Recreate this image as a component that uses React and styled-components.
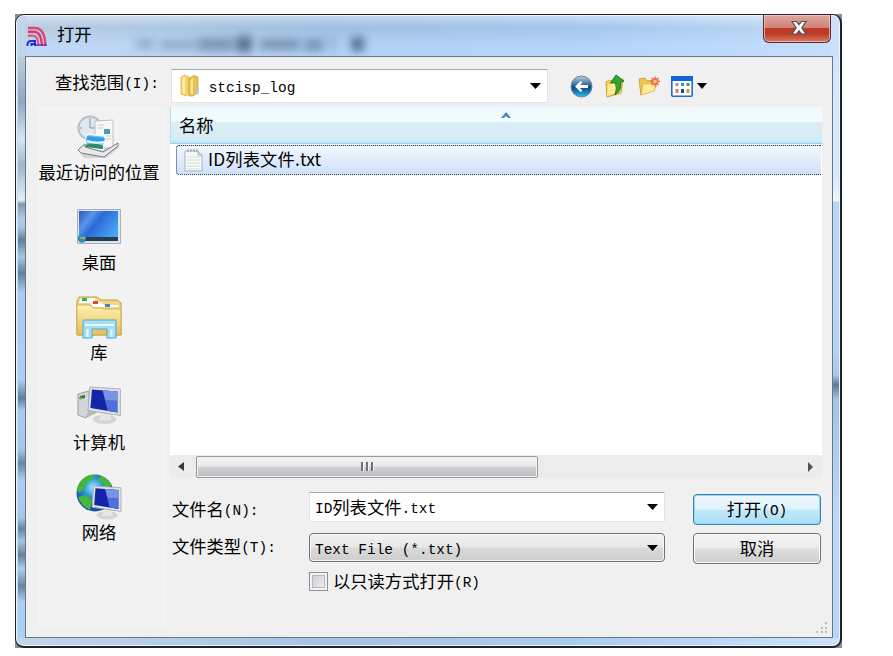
import styled, { createGlobalStyle } from "styled-components";

const GlobalStyle = createGlobalStyle`
  * {
    box-sizing: border-box;
  }
  body {
    margin: 0;
    background-color: #fff;
    font-family: "Noto Sans CJK SC", sans-serif;
    font-size: 17.3px;
    color: #000;
  }
  svg {
    display: block;
    flex: none;
  }
`;
const Backdrop = styled.div`
  width: 827px;
  height: 634px;
  margin: 14px 0 0 15px;
  background-color: #8d8d8d;
`;
const Window = styled.div`
  position: relative;
  width: 827px;
  height: 634px;
  padding: 0 9px 10px 10px;
  border-radius: 9px;
  overflow: hidden;
  border: 1px solid #1d2329;
  border-width: 1px 2px 2px 1px;
  background: linear-gradient(90deg, #c3d5e8 0, #a6c4e4 38%, #abcdf2 70%, #cde2fa 100%);
  box-shadow: inset 0 0 0 1px #e8f3fd;
`;
const EdgeGlass = styled.div`
  position: absolute;
  top: 42px;
  bottom: 8px;
  width: 7px;
  ${props => (props.$right ? "right: 1px;" : "left: 2px;")}
  background: ${props =>
    props.$right
      ? "linear-gradient(#d6e6fa 0, #d9e9fc 120px, #eef6fd 144px, #bcd7f5 145px, #b4d4f8 290px, #a9c8ea 318px, #62788f 328px, #a3c4e6 342px, #bad8fa 460px, #b8d5f8)"
      : "linear-gradient(#bccfdf 0, #8ba8c3 45px, #d5e8f8 82px, #9eb5cc 108px, #e5eff7 143px, #7e9ab2 147px, #b0cce3 162px, #a9c8e4 170px, #617d98 183px, #a7c8e7 200px, #637f9a 216px, #a8cbee 235px, #aecff1 323px, #607e9a 341px, #aacbed 354px, #a5c6e7 393px, #68849e 406px, #add0f3 423px, #a7c8e9 460px, #68849e 472px, #a5c6e7 484px, #698299 498px, #acceef 512px, #68849e 529px, #acd0f2 545px)"};
`;
const TitleBar = styled.div`
  position: relative;
  display: flex;
  align-items: flex-start;
  height: 41px;
  background: linear-gradient(rgba(255, 255, 255, 0.35) 0, rgba(110, 153, 197, 0.12) 30%, rgba(190, 219, 255, 0.55) 75%);
  .title_icon {
    margin: 11px 9px 0 0;
  }
  .title_text {
    line-height: 24px;
    margin-top: 7px;
  }
`;
const Smudges = styled.svg`
  position: absolute;
  left: 100px;
  top: 14px;
  filter: blur(4px);
`;
const CloseButton = styled.button`
  display: flex;
  align-items: center;
  justify-content: center;
  width: 68px;
  height: 28px;
  margin: 0 0 0 auto;
  padding: 0 0 1px 3px;
  border: 1px solid #57292c;
  border-top: none;
  border-radius: 0 0 6px 6px;
  background: linear-gradient(#dfa69d 0, #cf8379 46%, #bd3a28 50%, #b93c29 70%, #d77b66 100%);
  box-shadow: inset 0 0 0 1px rgba(255, 215, 205, 0.65);
`;
const Client = styled.div`
  position: relative;
  width: 808px;
  height: 582px;
  margin-left: -1px;
  border: 1px solid #667787;
  background-color: #f0f0f0;
`;
const LookRow = styled.div`
  display: flex;
  align-items: flex-start;
  height: 50px;
  padding: 12px 0 0 29px;
  .look_label {
    width: 116px;
    padding-top: 1px;
  }
`;
const Combo = styled.div`
  display: flex;
  align-items: center;
  width: ${props => props.$width}px;
  height: ${props => props.$height}px;
  padding: 0 6px 0 ${props => props.$left || 5}px;
  border: 1px solid #e2e3e6;
  border-top-color: #a5a7ab;
  background-color: #fff;
  .combo_arrow {
    margin-left: auto;
  }
`;
const DropDown = styled(Combo)`
  border: 1px solid #707070;
  border-radius: 4px;
  background: linear-gradient(#f1f1f1 0, #e8e8e8 48%, #dadada 52%, #cecece 100%);
  box-shadow: inset 0 0 0 1px #f8f8f8;
`;
const Tools = styled.div`
  display: flex;
  align-items: center;
  gap: 11px;
  height: 34px;
  margin-left: 22px;
  .tools_arrow {
    margin-left: -7px;
  }
`;
const Middle = styled.div`
  display: flex;
`;
const Places = styled.div`
  width: 128px;
  height: 521px;
  margin: 0 4px 0 12px;
  padding-right: 6px;
  background-color: #f2f2f2;
  border: 1px solid #f5f5f5;
`;
const Place = styled.div`
  display: flex;
  flex-direction: column;
  align-items: center;
  height: 90px;
  padding-top: 6px;
  white-space: nowrap;
  line-height: 24px;
`;
const Main = styled.div`
  width: 652px;
`;
const FileList = styled.div`
  height: 348px;
  background-color: #fff;
`;
const ListHeader = styled.div`
  display: flex;
  height: 37px;
  padding: 6px 8px;
  line-height: 24px;
  border-bottom: 1px solid #92d2f2;
  border-left: 1px solid #b5e0f2;
  background: linear-gradient(#f0f9fb 0, #f2fcfe 40%, #daeef6 42%, #d7ebf2 92%, #b8e3f5 100%);
  svg {
    margin: -1px 0 0 287px;
  }
`;
const FileRow = styled.div`
  display: flex;
  align-items: center;
  height: 30px;
  margin: 1px 1px 0 6px;
  padding-left: 6px;
  border: 1px dotted #20324a;
  border-right: none;
  border-radius: 3px 0 0 3px;
  background: linear-gradient(#f2f7fd, #cfe1f9);
  line-height: 24px;
  svg {
    margin-right: 4px;
  }
  span {
    margin-top: -2px;
    letter-spacing: 0.15px;
  }
`;
const ScrollBar = styled.div`
  display: flex;
  align-items: center;
  height: 23px;
  padding: 0 8px 0 8px;
  background-color: #ececec;
`;
const Thumb = styled.div`
  display: flex;
  align-items: center;
  justify-content: center;
  gap: 2px;
  width: 342px;
  height: 22px;
  margin: 0 auto 0 11px;
  border: 1px solid #989898;
  border-radius: 2px;
  background: linear-gradient(#f4f4f4 0, #e8e8ea 46%, #d2d2d5 52%, #bdbdc2 100%);
  box-shadow: inset 0 0 0 1px #f3f3f3;
  i {
    width: 3px;
    height: 9px;
    border-left: 2px solid #6f6f74;
    border-right: 1px solid #f5f5f5;
  }
`;
const Form = styled.div`
  display: grid;
  grid-template-columns: 139px 356px 128px;
  .form_label {
    padding-left: 2px;
  }
`;
const Fields = styled.div`
  display: flex;
  flex-direction: column;
  padding-top: ${props => props.$top}px;
  gap: ${props => props.$gap}px;
  margin-left: ${props => props.$left || 0}px;
`;
const Button = styled.button`
  width: 128px;
  height: 31px;
  padding: 0 0 2px;
  font: inherit;
  color: #000;
  border: 1px solid ${props => (props.$primary ? "#3c7fb1" : "#707070")};
  border-radius: 4px;
  background: ${props =>
    props.$primary
      ? "linear-gradient(#edf8fd 0, #def3fc 48%, #c3e9fa 52%, #a9ddf6 100%)"
      : "linear-gradient(#f3f3f3 0, #ebebeb 48%, #dcdcdc 52%, #cfcfcf 100%)"};
  box-shadow: inset 0 0 0 1px ${props => (props.$primary ? "#8fd9f5" : "#fafafa")};
`;
const CheckRow = styled.div`
  display: flex;
  align-items: center;
  gap: 5px;
  margin-top: -4px;
`;
const CheckBox = styled.span`
  width: 19px;
  height: 19px;
  border: 1px solid #8e8f8f;
  background: linear-gradient(135deg, #c6cad2, #f3f3f5);
  box-shadow: inset 0 0 0 2px #f4f4f4, inset 0 0 0 3px #b5b8bd;
`;
const SongText = styled.span`
  display: inline-block;
  height: 24px;
  line-height: 24px;
  white-space: pre;
  .half {
    font-family: "Liberation Mono", monospace;
    font-size: 14.45px;
    line-height: 1;
    vertical-align: 1px;
  }
`;
const Grip = styled.svg`
  position: absolute;
  right: 4px;
  bottom: 3px;
`;

// full width glyphs and half width glyphs sit on a 2:1 grid
const Song = ({ children, className }) => (
  <SongText className={className}>
    {children.split(/([\x20-\x7e]+)/).map((part, index) =>
      index % 2 ? (
        <span key={index} className='half'>
          {part}
        </span>
      ) : (
        part
      )
    )}
  </SongText>
);
const Arrow = () => (
  <svg className='combo_arrow' width='11' height='6' viewBox='0 0 11 6'>
    <path d='M0 0H11L5.5 6Z' />
  </svg>
);
const AppIcon = () => (
  <svg className='title_icon' width='22' height='22' viewBox='0 0 22 22' fill='none'>
    <path d='M2 2H9C15 2 19 7 19.5 20' stroke='#e0436b' strokeWidth='2.4' />
    <path d='M2 5.8H8C13 5.8 15.5 10 16 20' stroke='#d33b6b' strokeWidth='2.4' />
    <path d='M2 9.6H6C11 9.6 12 13 12.5 20' stroke='#e6547a' strokeWidth='2.2' />
    <path d='M1.5 20V18Q2 15 5 15H9V20M5.5 20V18H9' stroke='#2330d8' strokeWidth='2' />
    <path d='M10 19H21' stroke='#7a2fb0' strokeWidth='1.4' />
  </svg>
);
const FolderIcon = () => (
  <svg width='20' height='24' viewBox='0 0 20 24'>
    <path d='M1 3L5 1L9 3V20L6 22L1 20Z' fill='#f3d56b' stroke='#d6b244' strokeWidth='.7' />
    <path d='M9 4L14 1.5L18 3V18L13 22H9Z' fill='#e7c04d' stroke='#c9a136' strokeWidth='.7' />
    <path d='M2.5 4L5 3V20L2.5 19Z' fill='#fff0a8' />
    <path d='M10.5 6L13 4V20H10.5Z' fill='#fae796' />
    <path d='M17 13L19 14V19L16 21Z' fill='#a9cce4' />
  </svg>
);
const BackIcon = () => (
  <svg width='23' height='23' viewBox='0 0 23 23'>
    <defs>
      <linearGradient id='back' x2='0' y2='1'>
        <stop offset='0' stopColor='#c3d0dc' />
        <stop offset='.4' stopColor='#3c6e9c' />
        <stop offset='.55' stopColor='#0c4a84' />
        <stop offset='1' stopColor='#29bdf0' />
      </linearGradient>
    </defs>
    <circle cx='11.5' cy='11.5' r='10.5' fill='url(#back)' stroke='#70859a' />
    <path d='M10.5 6L5 11.5L10.5 17L12.5 15.5L10 13H18V10H10L12.5 7.5Z' fill='#f5fbff' />
  </svg>
);
const UpIcon = () => (
  <svg width='22' height='24' viewBox='0 0 22 24'>
    <path d='M2 8L7 6L9 8L19 5L17 19L3 23Z' fill='#f2cf55' stroke='#d0a32e' />
    <path d='M4 11L16 7L15 18L3 22Z' fill='#ffec91' />
    <path d='M12 1L20 7L16.5 8.5Q18 16 11 21Q13.5 14 11.5 9L6.5 9Z' fill='#32a52c' stroke='#187018' strokeWidth='.9' />
  </svg>
);
const NewIcon = () => (
  <svg width='23' height='22' viewBox='0 0 23 22'>
    <path d='M2 4L8 3L10 6L18 5L19 12L4 20Z' fill='#edc653' stroke='#d1a63a' />
    <path d='M4 20L6 9L20 8L17 16Z' fill='#ffee99' stroke='#d5ad43' strokeWidth='.8' />
    <g stroke='#f4714c' strokeWidth='1.6'>
      <path d='M18 1.5V11.5M13 6.5H23M14.5 3L21.5 10M21.5 3L14.5 10' />
      <circle cx='18' cy='6.5' r='2.6' fill='#ffc98a' />
    </g>
  </svg>
);
const ViewIcon = () => (
  <svg width='22' height='21' viewBox='0 0 22 21'>
    <rect x='.8' y='.8' width='20.4' height='19.4' rx='1' fill='#fff' stroke='#246bd0' strokeWidth='1.6' />
    <path d='M0 0H22V5H0Z' fill='#1265d8' />
    <path d='M4.5 7h3v3h-3Z' fill='#9b8bc8' />
    <path d='M10 7h3v3h-3Z' fill='#3b94c4' />
    <path d='M15.5 7h3v3h-3Z' fill='#33a14a' />
    <path d='M4.5 13h3v4h-3Z' fill='#e87863' />
    <path d='M10 13h3v4h-3Z' fill='#174a95' />
    <path d='M15.5 13h3v4h-3Z' fill='#c5a133' />
  </svg>
);
const TextFileIcon = () => (
  <svg width='21' height='24' viewBox='0 0 21 24'>
    <path d='M2 3H15L19 7V23H2Z' fill='#f8f9f9' stroke='#a9b0b5' />
    <path d='M5 1V4M8 1V4M11 1V4M14 1V4' stroke='#969da3' />
    <path d='M15 3V7H19' fill='#ddd' stroke='#a9b0b5' />
    <path d='M4 9H17M4 12H17M4 15H17M4 18H17M4 21H17' stroke='#d3d8da' />
  </svg>
);
const RecentIcon = () => (
  <svg width='46' height='46' viewBox='0 0 46 46'>
    <path d='M5 40L10 29L44 33L30 44H8Z' fill='#b9bcbe' opacity='.6' />
    <circle cx='14' cy='14' r='11.5' fill='#e0e8ee' stroke='#b4c0c9' strokeWidth='2' />
    <path d='M14 4V14H20M14 24V22M4 14H6' stroke='#8296a5' fill='none' />
    <path d='M19 7L37 6V34H19Z' fill='#f8f8f8' stroke='#bcc1c5' />
    <path d='M22 11H28M22 14H27M30 22H35M30 25H35' stroke='#c2cbd1' />
    <path d='M28 15H34V20H28Z' fill='#4b9aba' />
    <path d='M11 20L29 22L27 36L9 33Z' fill='#70c7f1' stroke='#f2fbff' strokeWidth='1.5' />
    <path d='M10 31Q17 27 27 32V35L9 33Z' fill='#328b66' />
    <path d='M11 22L29 24L28 28L10 27Z' fill='#3b9ce0' />
    <path d='M11 27Q20 30 28 28' fill='none' stroke='#e4f7ff' strokeWidth='2' />
    <path d='M2 36L9 30V33L27 38L42 29V32L28 43L5 39Z' fill='#e8eaeb' stroke='#777d80' />
  </svg>
);
const DesktopIcon = () => (
  <svg width='46' height='46' viewBox='0 0 46 46'>
    <defs>
      <linearGradient id='desk' x2='1' y2='.6'>
        <stop offset='0' stopColor='#2856b7' />
        <stop offset='.3' stopColor='#5a94e9' />
        <stop offset='.5' stopColor='#2c69d6' />
        <stop offset='1' stopColor='#48a5f4' />
      </linearGradient>
    </defs>
    <path d='M1.5 5.5H44.5V39.5H1.5Z' fill='#dce4ee' stroke='#a8afbc' />
    <path d='M3 7H42V37H3Z' fill='url(#desk)' />
    <path d='M3 33H42V37H3Z' fill='#263c50' />
    <circle cx='6' cy='34.5' r='4.2' fill='#2a8cba' />
    <path d='M4 33H6V35H4Z' fill='#eb8155' />
    <path d='M6.5 33H8.5V35H6.5Z' fill='#9fd35d' />
  </svg>
);
const LibraryIcon = () => (
  <svg width='48' height='46' viewBox='0 0 48 46'>
    <defs>
      <linearGradient id='lib' x2='0' y2='1'>
        <stop offset='0' stopColor='#fff2b2' />
        <stop offset='1' stopColor='#e5bd55' />
      </linearGradient>
    </defs>
    <path d='M2 41V7L4 3H22L26 6H42L46 9V41Z' fill='#f1d783' stroke='#c19c43' />
    <path d='M6 4H20V8H25L29 11H43V13H18L15 9H4Z' fill='#fff' />
    <path d='M7 4h5v3h-5Z' fill='#2eb34a' />
    <path d='M18 7h5v3h-5Z' fill='#df4934' />
    <path d='M30 10h5v3h-5Z' fill='#318cc8' />
    <path d='M2 11H15L18 14H26L29 15H46V41H2Z' fill='url(#lib)' stroke='#c7a34a' strokeWidth='.8' />
    <path d='M8 44V27Q8 26 9 26H40Q41 26 41 27V44H32V35H17V44Z' fill='#a4ddf4' stroke='#48a9d1' />
    <path d='M10 31H39M12.5 35V43M36.5 35V43' stroke='#e5faff' strokeWidth='2' />
  </svg>
);
const Screen = ({ x, y, size }) => (
  <g transform={`translate(${x} ${y}) scale(${size})`}>
    <ellipse cx='17' cy='33' rx='12' ry='5' fill='#d3d6d9' />
    <path d='M14 25H21L24 34H11Z' fill='#e3e5e7' />
    <path d='M2 0L33 2V29L0 24Z' fill='#dfe2e6' stroke='#a6adb5' />
    <path d='M4 2.5L30 4.5V26L2.5 21.5Z' fill='#1424a8' />
    <path d='M15 3.3L30 4.5V26L20 24.3Z' fill='#4f70dc' />
    <path d='M15 3.3L30 4.5V14L17.5 13Z' fill='#93aeef' opacity='.6' />
  </g>
);
const ComputerIcon = () => (
  <svg width='48' height='46' viewBox='0 0 48 46'>
    <path d='M3 10L14 7V28L11 34L3 31Z' fill='#d3d6d9' stroke='#9ca1a6' />
    <path d='M5 12L10 11V14L5 15Z' fill='#4d5d54' />
    <circle cx='5.5' cy='14' r='1.5' fill='#54b63d' />
    <path d='M11 34L22 29L20 26L14 27Z' fill='#b7babd' />
    <Screen x={13} y={3} size={0.98} />
  </svg>
);
const NetworkIcon = () => (
  <svg width='48' height='46' viewBox='0 1 48 46'>
    <defs>
      <radialGradient id='globe' cx='.45' cy='.35'>
        <stop offset='0' stopColor='#9be9fa' />
        <stop offset='.5' stopColor='#2f98d4' />
        <stop offset='1' stopColor='#1a4fa8' />
      </radialGradient>
    </defs>
    <circle cx='20' cy='20' r='18.5' fill='url(#globe)' />
    <path d='M5 9Q12 0 20 2L17 7L12 9L9 16L4 20L2 17ZM26 3Q34 6 37 13L30 14L27 9L22 8ZM3 24L10 22L17 27L15 37Q6 33 3 24Z' fill='#43b739' />
    <Screen x={17} y={13} size={0.88} />
  </svg>
);

const arrPlaces = [
  { name: "最近访问的位置", Icon: RecentIcon },
  { name: "桌面", Icon: DesktopIcon },
  { name: "库", Icon: LibraryIcon },
  { name: "计算机", Icon: ComputerIcon },
  { name: "网络", Icon: NetworkIcon },
];

const App = () => {
  return (
    <>
      <GlobalStyle />
      <Backdrop>
        <Window>
          <EdgeGlass />
          <EdgeGlass $right />
          <TitleBar>
            <Smudges width='260' height='30'>
              <g fill='#526d8c'>
                <path d='M10 11h18v8h-18ZM34 12h36v8h-36Z' opacity='.45' />
                <path d='M72 9h35v13h-35Z' opacity='.6' />
                <path d='M110 7h16v16h-16Z' opacity='.95' />
                <path d='M134 10h40v11h-40ZM178 10h20v12h-20Z' opacity='.6' />
                <path d='M205 8h4v14h-4Z' opacity='.5' />
                <path d='M225 8h13v14h-13Z' opacity='.95' />
              </g>
            </Smudges>
            <AppIcon />
            <span className='title_text'>打开</span>
            <CloseButton>
              <svg width='18' height='16' viewBox='0 0 18 16'>
                <path d='M2 1.5H6.5L9 4.5L11.5 1.5H16L11.8 7.7L16 14H11.5L9 10.8L6.5 14H2L6.2 7.7Z' fill='#fff' stroke='#5b4a57' strokeWidth='1.2' />
              </svg>
            </CloseButton>
          </TitleBar>
          <Client>
            <LookRow>
              <Song className='look_label'>查找范围(I):</Song>
              <Combo $width={377} $height={34} $left={8}>
                <FolderIcon />
                <Song>{" stcisp_log"}</Song>
                <Arrow />
              </Combo>
              <Tools>
                <BackIcon />
                <UpIcon />
                <NewIcon />
                <ViewIcon />
                <svg className='tools_arrow' width='10' height='6' viewBox='0 0 10 6'>
                  <path d='M0 0H10L5 6Z' />
                </svg>
              </Tools>
            </LookRow>
            <Middle>
              <Places>
                {arrPlaces.map(({ name, Icon }) => (
                  <Place key={name}>
                    <Icon />
                    {name}
                  </Place>
                ))}
              </Places>
              <Main>
                <FileList>
                  <ListHeader>
                    名称
                    <svg width='10' height='6' viewBox='0 0 10 6'>
                      <path d='M0 6L5 0L10 6H7L5 4L3 6Z' fill='#4a8aad' />
                    </svg>
                  </ListHeader>
                  <FileRow>
                    <TextFileIcon />
                    <span>ID列表文件.txt</span>
                  </FileRow>
                </FileList>
                <ScrollBar>
                  <svg width='7' height='10' viewBox='0 0 7 10'>
                    <path d='M6 0V9L0 4.5Z' fill='#3d3d3d' />
                  </svg>
                  <Thumb>
                    <i />
                    <i />
                    <i />
                  </Thumb>
                  <svg width='6' height='10' viewBox='0 0 6 10'>
                    <path d='M0 0V10L5 5Z' fill='#505050' />
                  </svg>
                </ScrollBar>
                <Form>
                  <Fields $top={19} $gap={13} className='form_label'>
                    <Song>文件名(N):</Song>
                    <Song>文件类型(T):</Song>
                  </Fields>
                  <Fields $top={14} $gap={11}>
                    <Combo $width={356} $height={30}>
                      <Song>ID列表文件.txt</Song>
                      <Arrow />
                    </Combo>
                    <DropDown $width={356} $height={29}>
                      <Song>Text File (*.txt)</Song>
                      <Arrow />
                    </DropDown>
                    <CheckRow>
                      <CheckBox />
                      <Song>以只读方式打开(R)</Song>
                    </CheckRow>
                  </Fields>
                  <Fields $top={16} $gap={8} $left={28}>
                    <Button $primary>
                      <Song>打开(O)</Song>
                    </Button>
                    <Button>
                      <Song>取消</Song>
                    </Button>
                  </Fields>
                </Form>
              </Main>
            </Middle>
            <Grip width='12' height='12' fill='#bcbcbc'>
              <path d='M9 0h2v2h-2ZM9 5h2v2h-2ZM9 9h2v2h-2ZM5 5h2v2h-2ZM5 9h2v2h-2ZM0 9h2v2h-2Z' />
            </Grip>
          </Client>
        </Window>
      </Backdrop>
    </>
  );
};

export default App;
